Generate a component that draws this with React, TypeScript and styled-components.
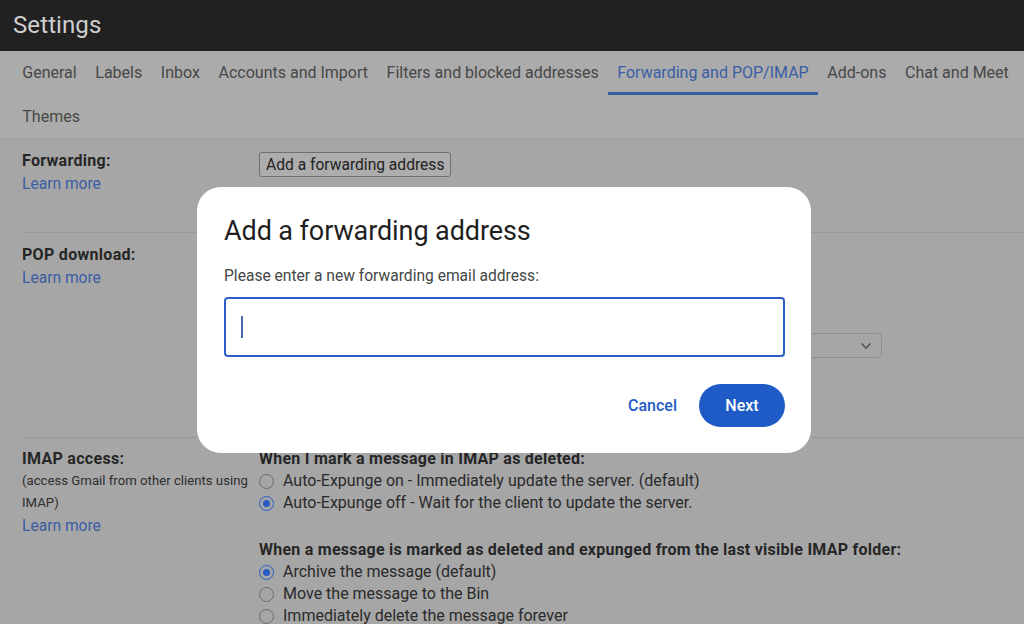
import React from "react";
import styled, { createGlobalStyle } from "styled-components";

const Global = createGlobalStyle`
  html, body { margin: 0; padding: 0; }
  body {
    width: 1024px;
    height: 624px;
    overflow: hidden;
    background: #a6a6a6;
    font-family: Roboto, "Noto Sans", Arial, sans-serif;
  }
  * { box-sizing: border-box; }
`;

const Page = styled.div`
  display: flex;
  flex-direction: column;
  width: 1024px;
  height: 624px;
  overflow: hidden;
  background: #a6a6a6;
  & > * { flex-shrink: 0; }
`;

const Header = styled.header`
  height: 51px;
  background: #212121;
  display: flex;
  align-items: center;
  padding-left: 13px;
  color: #cfcfcf;
  font-size: 24px;
  font-weight: 400;
  letter-spacing: 0.1px;
  padding-bottom: 2px;
`;

const TabBar = styled.nav`
  display: flex;
  flex-wrap: wrap;
  padding: 0 0 0 13px;
  background: #ababab;
  border-bottom: 1px solid #a0a0a0;
  height: 88px;
  align-content: flex-start;
`;

const Tab = styled.div<{ $active?: boolean }>`
  height: 44px;
  padding: 0 9.3px;
  display: flex;
  align-items: center;
  font-size: 16px;
  color: ${(p) => (p.$active ? "#3a5ea4" : "#474747")};
  border-bottom: 3px solid ${(p) => (p.$active ? "#3a5ea4" : "transparent")};
  padding-top: 2px;
  white-space: nowrap;
`;

const Section = styled.section<{ $minH: number; $pad?: number }>`
  display: grid;
  grid-template-columns: 237px 1fr;
  margin: 0 0 0 22px;
  min-height: ${(p) => p.$minH}px;
  border-bottom: 1px solid #999999;
  padding-top: ${(p) => p.$pad ?? 10}px;
`;

const LabelCol = styled.div`
  display: flex;
  flex-direction: column;
`;

const Label = styled.div`
  font-size: 16px;
  font-weight: 700;
  letter-spacing: 0.3px;
  color: #262626;
  line-height: 22px;
`;

const SubNote = styled.div`
  font-size: 13.2px;
  color: #2e2e2e;
  line-height: 22px;
  white-space: nowrap;
`;

const LearnMore = styled.a`
  font-size: 15.6px;
  color: #3b5da3;
  line-height: 24px;
  text-decoration: none;
`;

const ContentCol = styled.div`
  display: flex;
  flex-direction: column;
  color: #262626;
  font-size: 16px;
`;

const GreyButton = styled.button`
  align-self: flex-start;
  margin-top: 2px;
  height: 25px;
  padding: 0 6px;
  font-family: Roboto, Arial, sans-serif;
  font-size: 15.6px;
  color: #222;
  background: #adadad;
  border: 1px solid #6f6f6f;
  border-radius: 3px;
`;

const Heading = styled.div<{ $gap?: number }>`
  font-weight: 700;
  font-size: 16px;
  letter-spacing: 0.25px;
  line-height: 22px;
  margin-top: ${(p) => p.$gap ?? 0}px;
  color: #262626;
  white-space: nowrap;
`;

const RadioRow = styled.label`
  display: flex;
  align-items: center;
  gap: 9px;
  height: 22px;
  line-height: 22px;
  white-space: nowrap;
  color: #2a2a2a;
`;

const RadioDot = styled.span<{ $on?: boolean }>`
  width: 15px;
  height: 15px;
  border-radius: 50%;
  border: 1.5px solid ${(p) => (p.$on ? "#2a5cc4" : "#6a6a6a")};
  display: flex;
  align-items: center;
  justify-content: center;
  flex: none;
  &::after {
    content: "";
    width: 7px;
    height: 7px;
    border-radius: 50%;
    background: ${(p) => (p.$on ? "#2a5cc4" : "transparent")};
  }
`;

const FakeSelect = styled.div`
  margin: 89px 0 0 323px;
  width: 300px;
  height: 25px;
  border: 1px solid #8f8f8f;
  border-radius: 4px;
  display: flex;
  align-items: center;
  justify-content: flex-end;
  padding: 0 9px;
`;

const Dialog = styled.div`
  position: fixed;
  left: 197px;
  top: 187px;
  width: 614px;
  height: 266px;
  background: #ffffff;
  border-radius: 24px;
  padding: 27px 26px 0 27px;
  display: flex;
  flex-direction: column;
`;

const DialogTitle = styled.h2`
  margin: 0;
  font-size: 27px;
  line-height: 34px;
  font-weight: 400;
  color: #1f1f1f;
  letter-spacing: -0.1px;
`;

const DialogLabel = styled.div`
  margin-top: 18px;
  font-size: 15.6px;
  line-height: 20px;
  color: #444746;
`;

const Field = styled.div`
  margin-top: 11px;
  height: 60px;
  width: 561px;
  border: 2px solid #2c5fca;
  border-radius: 4px;
  display: flex;
  align-items: center;
  padding-left: 15px;
`;

const Caret = styled.span`
  width: 1.5px;
  height: 22px;
  background: #4a6ab8;
`;

const Actions = styled.div`
  margin-top: 27px;
  display: flex;
  justify-content: flex-end;
  align-items: center;
  gap: 10px;
  width: 561px;
`;

const TextButton = styled.button`
  background: none;
  border: none;
  height: 43px;
  padding: 0 12px;
  font-family: Roboto, Arial, sans-serif;
  font-size: 16px;
  font-weight: 500;
  color: #1f5bc6;
`;

const FilledButton = styled.button`
  width: 86px;
  height: 43px;
  border-radius: 22px;
  border: none;
  background: #1e5bc6;
  color: #ffffff;
  font-family: Roboto, Arial, sans-serif;
  font-size: 16px;
  font-weight: 500;
`;

const tabs = [
  "General",
  "Labels",
  "Inbox",
  "Accounts and Import",
  "Filters and blocked addresses",
  "Forwarding and POP/IMAP",
  "Add-ons",
  "Chat and Meet",
  "Themes",
];

export default function App() {
  return (
    <>
      <Global />
      <Page>
        <Header>Settings</Header>
        <TabBar>
          {tabs.map((t) => (
            <Tab key={t} $active={t === "Forwarding and POP/IMAP"}>
              {t}
            </Tab>
          ))}
        </TabBar>

        <Section $minH={94} $pad={11}>
          <LabelCol>
            <Label>Forwarding:</Label>
            <LearnMore>Learn more</LearnMore>
          </LabelCol>
          <ContentCol>
            <GreyButton>Add a forwarding address</GreyButton>
          </ContentCol>
        </Section>

        <Section $minH={205} $pad={11}>
          <LabelCol>
            <Label>POP download:</Label>
            <LearnMore>Learn more</LearnMore>
          </LabelCol>
          <ContentCol>
            <FakeSelect>
              <svg width="12" height="8" viewBox="0 0 12 8">
                <path d="M1.5 1.5 L6 6 L10.5 1.5" fill="none" stroke="#555" strokeWidth="1.6" />
              </svg>
            </FakeSelect>
          </ContentCol>
        </Section>

        <Section $minH={200}>
          <LabelCol>
            <Label>IMAP access:</Label>
            <SubNote>(access Gmail from other clients using</SubNote>
            <SubNote>IMAP)</SubNote>
            <LearnMore>Learn more</LearnMore>
          </LabelCol>
          <ContentCol>
            <Heading>When I mark a message in IMAP as deleted:</Heading>
            <RadioRow>
              <RadioDot />
              Auto-Expunge on - Immediately update the server. (default)
            </RadioRow>
            <RadioRow>
              <RadioDot $on />
              Auto-Expunge off - Wait for the client to update the server.
            </RadioRow>
            <Heading $gap={25}>
              When a message is marked as deleted and expunged from the last visible IMAP folder:
            </Heading>
            <RadioRow>
              <RadioDot $on />
              Archive the message (default)
            </RadioRow>
            <RadioRow>
              <RadioDot />
              Move the message to the Bin
            </RadioRow>
            <RadioRow>
              <RadioDot />
              Immediately delete the message forever
            </RadioRow>
          </ContentCol>
        </Section>
      </Page>

      <Dialog role="dialog">
        <DialogTitle>Add a forwarding address</DialogTitle>
        <DialogLabel>Please enter a new forwarding email address:</DialogLabel>
        <Field>
          <Caret />
        </Field>
        <Actions>
          <TextButton>Cancel</TextButton>
          <FilledButton>Next</FilledButton>
        </Actions>
      </Dialog>
    </>
  );
}
